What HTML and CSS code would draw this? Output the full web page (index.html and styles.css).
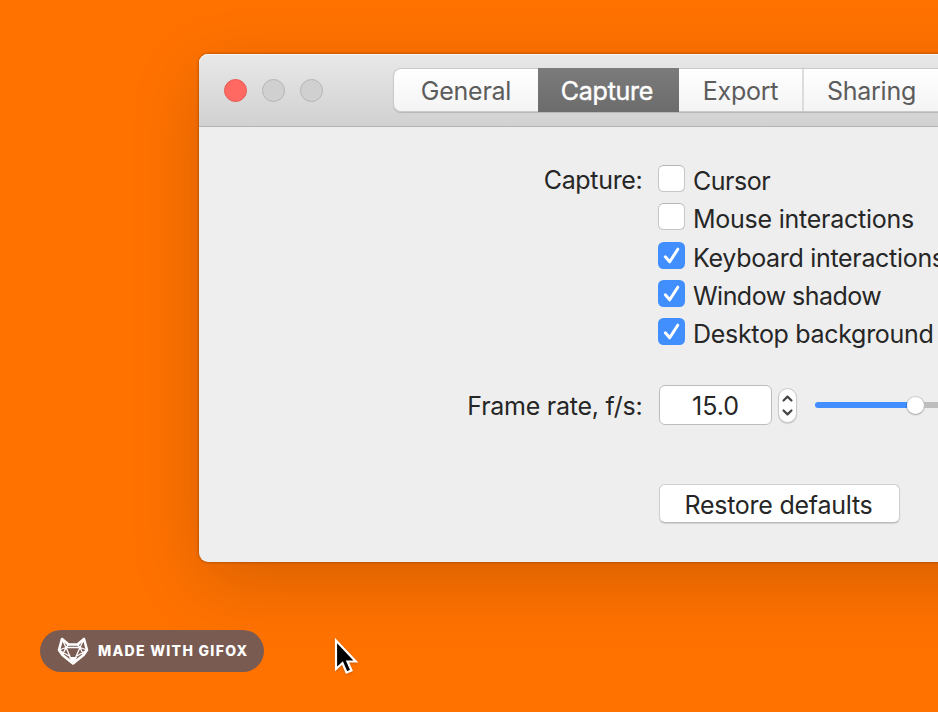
FILE: index.html
```html
<!DOCTYPE html>
<html lang="en">
<head>
<meta charset="utf-8">
<title>Preferences</title>
<link rel="stylesheet" href="styles.css">
</head>
<body>
<main class="desktop">
  <section class="window">
    <header class="titlebar">
      <div class="lights">
        <span class="light light-close"></span>
        <span class="light"></span>
        <span class="light"></span>
      </div>
      <nav class="tabs">
        <a class="tab tab-general"><span>General</span></a>
        <a class="tab tab-capture"><span>Capture</span></a>
        <a class="tab tab-export"><span>Export</span></a>
        <a class="tab tab-sharing"><span>Sharing</span></a>
      </nav>
    </header>
    <div class="panel">
      <div class="row row-capture">
        <div class="label"><span class="t-capture">Capture:</span></div>
        <div class="checks">
          <label class="check"><span class="box"></span><span class="t-cursor">Cursor</span></label>
          <label class="check"><span class="box"></span><span class="t-mouse">Mouse interactions</span></label>
          <label class="check"><span class="box box-on"><svg viewBox="0 0 27 27"><path d="M7.300 14.800 11.700 19.800 19.800 7.200"/></svg></span><span class="t-key">Keyboard interactions</span></label>
          <label class="check"><span class="box box-on"><svg viewBox="0 0 27 27"><path d="M7.300 14.800 11.700 19.800 19.800 7.200"/></svg></span><span class="t-window">Window shadow</span></label>
          <label class="check"><span class="box box-on"><svg viewBox="0 0 27 27"><path d="M7.300 14.800 11.700 19.800 19.800 7.200"/></svg></span><span class="t-desktop">Desktop background</span></label>
        </div>
      </div>
      <div class="row row-rate">
        <div class="label"><span class="t-rate">Frame rate, f/s:</span></div>
        <div class="field"><span>15.0</span></div>
        <svg class="stepper" viewBox="0 0 18 34"><path d="M4.800 11.800 9 7.600 13.200 11.800M4.800 22.200 9 26.400 13.200 22.200"/></svg>
        <div class="slider"><span class="fill"></span><span class="knob"></span><span class="rest"></span></div>
      </div>
      <div class="restore"><span>Restore defaults</span></div>
    </div>
  </section>
  <div class="badge">
    <svg class="fox" viewBox="0 0 32 30">
      <path class="outline" d="M5 3 11.500 8.500H20.500L27 3 30 14 26.500 19 16 27.500 5.500 19 2 14Z"/>
      <path class="facets" d="M5 3 9 11.500 2 14 13 20.500 9 11.500 11.500 8.500M27 3 23 11.500 30 14 19 20.500 23 11.500 20.500 8.500M9 11.500H23M5.500 19 9 11.500M26.500 19 23 11.500"/>
      <path class="nose" d="M12.500 21.500H19.500L16 27.500Z"/>
    </svg>
    <span>MADE WITH GIFOX</span>
  </div>
  <svg class="cursor" viewBox="0 0 30 42"><path d="M3 3.500V32L9.500 26 13.500 35.500 18.500 33.500 14.500 24.500H22.800Z"/></svg>
</main>
</body>
</html>
```
FILE: styles.css
```css
* { box-sizing: border-box; }
body { margin: 0; }
.desktop {
  position: relative;
  width: 938px;
  height: 712px;
  overflow: hidden;
  padding: 54px 0 0 199px;
  background: #ff7200;
  color: #262626;
  font: 25px/30px Inter, "Liberation Sans", sans-serif;
  letter-spacing: -.25px;
  white-space: nowrap;
}
.window {
  width: 1000px;
  height: 508px;
  border-radius: 9px;
  background: #eee;
  box-shadow: 0 0 3px rgba(0,0,0,.4), 0 20px 70px rgba(0,0,0,.16);
}
.titlebar {
  display: flex;
  height: 73px;
  padding-top: 14px;
  border-radius: 9px 9px 0 0;
  border-bottom: 1px solid #b5b5b5;
  background: linear-gradient(#e8e8e8, #d1d1d1);
  box-shadow: inset 0 1px #f6f6f6;
}
.lights { display: flex; gap: 14.700px; width: 194px; padding: 10.500px 0 0 24.500px; }
.light {
  width: 23.500px;
  height: 23.500px;
  flex: none;
  border: 1px solid #b5b5b5;
  border-radius: 50%;
  background: #d0d0d0;
}
.light-close { background: #ff6961; border-color: #e55a50; }
.tabs {
  display: flex;
  height: 44px;
  border-radius: 8px 0 0 8px;
  background: linear-gradient(#fff, #f4f4f4);
  border: solid #cacaca;
  border-width: 1px 0 1px 1px;
  box-shadow: 0 1px 1px rgba(0,0,0,.15);
  color: #5c5c5c;
}
.tab { display: flex; justify-content: center; align-items: center; padding-top: 2px; }
.tab-general { width: 144px; }
.tab-capture { width: 141px; margin: -1px 0; padding-right: 3px; background: linear-gradient(#7b7b7b, #6c6c6c); color: #fff; -webkit-text-stroke: .4px #fff; }
.tab-export { width: 125px; border-right: 2px solid #dcdcdc; }
.tab-sharing { width: 135px; }
.panel { padding-top: 38px; }
.row { display: flex; }
.label { width: 443.500px; text-align: right; }
.row-capture { height: 192px; }
.checks { margin-left: 15.500px; }
.check { display: flex; height: 38.250px; gap: 8px; }
.check > span:last-child { padding-top: 1px; }
.t-cursor { letter-spacing: -.5px; }
.t-key, .t-desktop { letter-spacing: -.31px; }
.t-window { letter-spacing: -.53px; }
.t-capture { letter-spacing: -.32px; }
.box {
  width: 27px;
  height: 27px;
  flex: none;
  border: 1px solid #c6c6c6;
  border-top-color: #b5b5b5;
  border-radius: 5.500px;
  background: #fff;
}
.box-on { border: 0; background: #418fff; }
.box svg { display: block; }
.box path { fill: none; stroke: #fff; stroke-width: 3; stroke-linecap: round; stroke-linejoin: round; }
.row-rate { height: 40px; margin-top: 28px; align-items: center; }
.row-rate .label, .field span { padding-top: 1px; }
.field {
  width: 113px;
  height: 40px;
  margin-left: 16.500px;
  display: flex;
  justify-content: center;
  align-items: center;
  border: 1px solid #bdbdbd;
  border-radius: 6px;
  background: #fff;
  letter-spacing: 0;
}
.stepper {
  width: 19px;
  height: 35px;
  margin-left: 6px;
  border-radius: 9.500px;
  border: 1px solid #c9c9c9;
  background: #fff;
  box-shadow: 0 1px 1px rgba(0,0,0,.15);
}
.stepper path { fill: none; stroke: #454545; stroke-width: 2.300; stroke-linecap: round; stroke-linejoin: round; }
.slider { display: flex; align-items: center; margin-left: 18px; }
.fill { width: 92px; height: 6px; border-radius: 3px 0 0 3px; background: #418fff; }
.knob { width: 17px; height: 17px; margin-top: 1px; border-radius: 50%; background: #fff; box-shadow: 0 0 1px 1px rgba(0,0,0,.15), 0 1px 2px rgba(0,0,0,.2); }
.rest { width: 80px; height: 6px; background: #bdbdbd; }
.restore {
  display: flex;
  justify-content: center;
  align-items: center;
  width: 241px;
  height: 39px;
  margin: 59px 0 0 460px;
  padding: 2px 2px 0 0;
  border: 1px solid #cfcfcf;
  border-bottom-color: #bababa;
  border-radius: 6px;
  background: #fff;
  box-shadow: 0 1px 1px rgba(0,0,0,.12);
}
.badge {
  position: absolute;
  left: 40px;
  top: 630px;
  display: flex;
  align-items: center;
  width: 224px;
  height: 42px;
  padding-left: 17px;
  gap: 9px;
  border-radius: 21px;
  background: #7a5b52;
  color: #fff;
  font-size: 14px;
  font-weight: 800;
  letter-spacing: 1.300px;
}
.fox { width: 32px; height: 30px; }
.fox path { fill: none; stroke: #fff; stroke-linejoin: round; }
.fox .outline { stroke-width: 2.600; }
.fox .facets { stroke-width: 1.300; }
.fox .nose { fill: #fff; stroke-width: 1; }
.cursor { position: absolute; left: 333px; top: 637px; width: 30px; height: 42px; filter: drop-shadow(0 1px 1px rgba(0,0,0,.2)); }
.cursor path { fill: #000; stroke: #fff; stroke-width: 2.200; }
```
